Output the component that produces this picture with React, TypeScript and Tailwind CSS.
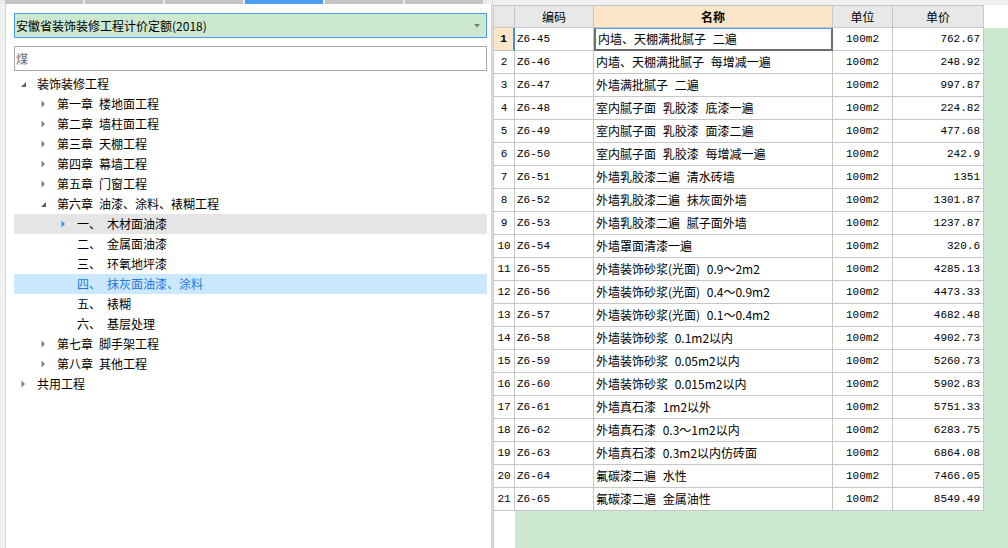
import React from 'react';

// 定额子目 (编码, 名称, 单价)
const rows: [string, string, string][] = [
  ['Z6-45', '内墙、天棚满批腻子 二遍', '762.67'],
  ['Z6-46', '内墙、天棚满批腻子 每增减一遍', '248.92'],
  ['Z6-47', '外墙满批腻子 二遍', '997.87'],
  ['Z6-48', '室内腻子面 乳胶漆 底漆一遍', '224.82'],
  ['Z6-49', '室内腻子面 乳胶漆 面漆二遍', '477.68'],
  ['Z6-50', '室内腻子面 乳胶漆 每增减一遍', '242.9'],
  ['Z6-51', '外墙乳胶漆二遍 清水砖墙', '1351'],
  ['Z6-52', '外墙乳胶漆二遍 抹灰面外墙', '1301.87'],
  ['Z6-53', '外墙乳胶漆二遍 腻子面外墙', '1237.87'],
  ['Z6-54', '外墙罩面清漆一遍', '320.6'],
  ['Z6-55', '外墙装饰砂浆(光面) 0.9～2m2', '4285.13'],
  ['Z6-56', '外墙装饰砂浆(光面) 0.4～0.9m2', '4473.33'],
  ['Z6-57', '外墙装饰砂浆(光面) 0.1～0.4m2', '4682.48'],
  ['Z6-58', '外墙装饰砂浆 0.1m2以内', '4902.73'],
  ['Z6-59', '外墙装饰砂浆 0.05m2以内', '5260.73'],
  ['Z6-60', '外墙装饰砂浆 0.015m2以内', '5902.83'],
  ['Z6-61', '外墙真石漆 1m2以外', '5751.33'],
  ['Z6-62', '外墙真石漆 0.3～1m2以内', '6283.75'],
  ['Z6-63', '外墙真石漆 0.3m2以内仿砖面', '6864.08'],
  ['Z6-64', '氟碳漆二遍 水性', '7466.05'],
  ['Z6-65', '氟碳漆二遍 金属油性', '8549.49'],
];

type TreeNode = {
  level: number;
  head?: string;
  label: string;
  arrow?: 'open' | 'closed' | 'hover';
  state?: 'hover' | 'selected';
};

const tree: TreeNode[] = [
  { level: 0, label: '装饰装修工程', arrow: 'open' },
  { level: 1, head: '第一章', label: '楼地面工程', arrow: 'closed' },
  { level: 1, head: '第二章', label: '墙柱面工程', arrow: 'closed' },
  { level: 1, head: '第三章', label: '天棚工程', arrow: 'closed' },
  { level: 1, head: '第四章', label: '幕墙工程', arrow: 'closed' },
  { level: 1, head: '第五章', label: '门窗工程', arrow: 'closed' },
  { level: 1, head: '第六章', label: '油漆、涂料、裱糊工程', arrow: 'open' },
  { level: 2, head: '一、', label: '木材面油漆', arrow: 'hover', state: 'hover' },
  { level: 2, head: '二、', label: '金属面油漆' },
  { level: 2, head: '三、', label: '环氧地坪漆' },
  { level: 2, head: '四、', label: '抹灰面油漆、涂料', state: 'selected' },
  { level: 2, head: '五、', label: '裱糊' },
  { level: 2, head: '六、', label: '基层处理' },
  { level: 1, head: '第七章', label: '脚手架工程', arrow: 'closed' },
  { level: 1, head: '第八章', label: '其他工程', arrow: 'closed' },
  { level: 0, label: '共用工程', arrow: 'closed' },
];

const cjk = "font-['Noto_Sans_CJK_SC',sans-serif]";
const mono = "font-['Liberation_Mono','Noto_Sans_CJK_SC',monospace]";

function Arrow({ kind }: { kind?: TreeNode['arrow'] }) {
  if (kind === 'open')
    return (
      <svg width="6" height="6" viewBox="0 0 6 6" className="mt-[1px]">
        <path d="M5 0 L5 5 L0 5 Z" fill="#5e5e5e" />
      </svg>
    );
  if (kind === 'closed' || kind === 'hover')
    return (
      <svg width="5" height="8" viewBox="0 0 5 8">
        <path d="M0.5 0.5 L4 4 L0.5 7.5 Z" fill={kind === 'hover' ? '#3c8df0' : '#808080'} />
      </svg>
    );
  return null;
}

function TreeRow({ node }: { node: TreeNode }) {
  const pad = node.level === 0 ? 'pl-[7px]' : node.level === 1 ? 'pl-[27px]' : 'pl-[47px]';
  const bg =
    node.state === 'hover' ? 'bg-[#e5e5e5]' : node.state === 'selected' ? 'bg-[#cce8ff] text-[#2479e0]' : 'text-black';
  return (
    <div className={`flex h-[20px] items-center ${pad} ${bg}`}>
      <div className="flex w-[16px] items-center">
        <Arrow kind={node.arrow} />
      </div>
      {node.head && (
        <span className={node.level === 2 ? 'w-[30px]' : 'mr-[6px]'}>{node.head}</span>
      )}
      <span>{node.label}</span>
    </div>
  );
}

function LeftPanel() {
  const tabs = [0, 1, 2, 3, 4, 5];
  return (
    <div className="flex h-full w-[492px] flex-col">
      {/* 顶部页签条 */}
      <div className="flex h-[4px] gap-[2px] bg-[#ececec] pl-[5px]">
        {tabs.map((t) => (
          <div key={t} className={`h-full w-[78px] ${t === 3 ? 'bg-[#4a9cf5]' : 'bg-[#c4c4c4]'}`} />
        ))}
      </div>
      <div className="flex flex-1">
        <div className="w-[6px] border-r border-[#d6d6d6] bg-[#f0f0f0]" />
        <div className={`flex flex-1 flex-col border-r border-[#cfcfcf] bg-white pl-[8px] pr-[4px] pt-[9px] text-[12px] ${cjk}`}>
          <div className="flex h-[25px] items-center justify-between border border-[#4a9cf5] bg-[#cce8cf] pl-[1px] pr-[6px]">
            <span className="text-black">安徽省装饰装修工程计价定额(2018)</span>
            <svg width="6" height="4" viewBox="0 0 6 4">
              <path d="M0 0 L6 0 L3 3.5 Z" fill="#7a7a7a" />
            </svg>
          </div>
          <div className="mt-[8px] flex h-[25px] items-center border border-[#a9a9a9] pl-[1px] text-[#6d6d6d]">
            煤
          </div>
          <div className="mt-[3px] flex flex-col">
            {tree.map((n, i) => (
              <TreeRow key={i} node={n} />
            ))}
          </div>
        </div>
      </div>
    </div>
  );
}

const cellBorder = 'border-r border-b border-[#c6c6c6]';

function RightPanel() {
  return (
    <div className="flex h-full flex-1 flex-col border-l border-[#e4e4e4]">
      <div className="h-[5px] bg-[#f0f0f0]" />
      <div className="flex flex-1 flex-col bg-[#cce8cf]">
        {/* 表头 */}
        <div className={`flex h-[23px] bg-white text-[12px] ${cjk}`}>
          <div className="flex border-l border-t border-[#c6c6c6]">
            <div className={`w-[21px] bg-[#e8e8e8] ${cellBorder}`} />
            <div className={`flex w-[79px] items-center justify-center bg-[#e8e8e8] ${cellBorder}`}>编码</div>
            <div className={`flex w-[239px] items-center justify-center bg-[#fde5c8] font-bold ${cellBorder}`}>名称</div>
            <div className={`flex w-[60px] items-center justify-center bg-[#e8e8e8] ${cellBorder}`}>单位</div>
            <div className={`flex w-[91px] items-center justify-center bg-[#e8e8e8] ${cellBorder}`}>单价</div>
          </div>
        </div>
        {/* 数据行 */}
        <div className="flex w-[491px] flex-col border-l border-[#c6c6c6] bg-white text-[12px] text-black">
          {rows.map(([code, name, price], i) => {
            const first = i === 0;
            return (
              <div key={code} className="flex h-[23px]">
                <div
                  className={`flex w-[21px] items-center justify-center ${mono} text-[11px] ${
                    first ? 'bg-[#fde5c8] font-bold' : ''
                  } border-b border-[#c6c6c6] ${first ? 'border-r-2 border-r-[#3c8df0]' : 'border-r'}`}
                >
                  {i + 1}
                </div>
                <div className={`flex w-[79px] items-center pl-[2px] ${mono} text-[11px] ${cellBorder}`}>{code}</div>
                <div
                  className={`flex w-[239px] items-center pl-[2px] [word-spacing:4px] ${cjk} ${
                    first ? 'border-2 border-t border-[#6e6e6e] border-t-[#4a9cf5]' : cellBorder
                  }`}
                >
                  {name}
                </div>
                <div className={`flex w-[60px] items-center justify-center ${mono} text-[11px] ${cellBorder}`}>100m2</div>
                <div className={`flex w-[91px] items-center justify-end pr-[3px] ${mono} text-[11px] ${cellBorder}`}>
                  {price}
                </div>
              </div>
            );
          })}
        </div>
        <div className="w-[22px] flex-1 border-l border-[#c6c6c6] bg-white" />
      </div>
    </div>
  );
}

export default function App() {
  return (
    <div className="flex h-[548px] w-[1008px] overflow-hidden bg-white">
      <LeftPanel />
      <RightPanel />
    </div>
  );
}
